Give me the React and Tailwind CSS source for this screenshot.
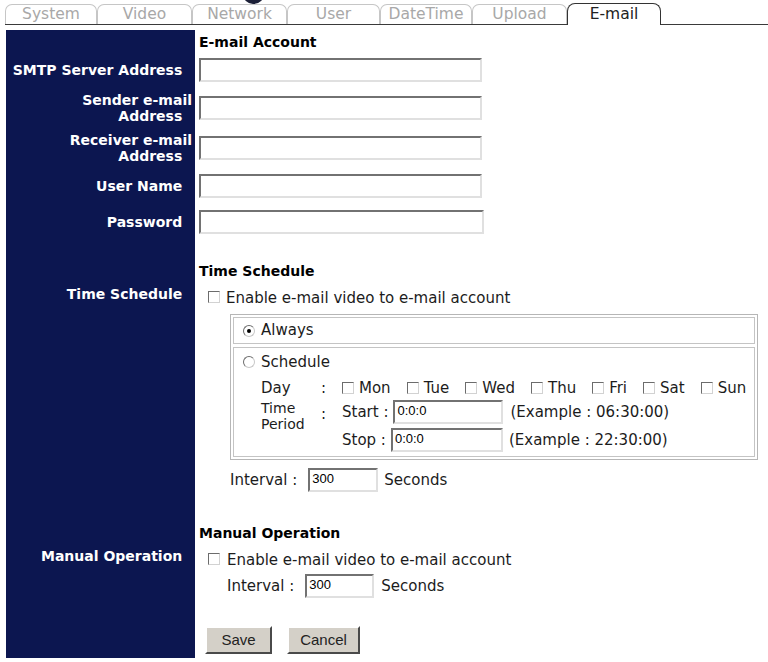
import React from 'react';

const tabs = [
  { name: 'System', w: 'w-[92px]' },
  { name: 'Video', w: 'w-[95px]' },
  { name: 'Network', w: 'w-[95px]' },
  { name: 'User', w: 'w-[93px]' },
  { name: 'DateTime', w: 'w-[92px]' },
  { name: 'Upload', w: 'w-[95px]' },
];

const days = ['Mon', 'Tue', 'Wed', 'Thu', 'Fri', 'Sat', 'Sun'];

// two trailing nbsp keep the label text off the panel edge, like the old table cells
const pad = (s) => s + '\u00a0\u00a0';

function Checkbox() {
  return (
    <span className="inline-block w-[12px] h-[12px] shrink-0 bg-white border border-[#d2d2d2] border-t-[#6c6c6c] border-l-[#6c6c6c]" />
  );
}

function Radio({ checked }) {
  return (
    <span className="w-[12px] h-[12px] shrink-0 rounded-full bg-white border border-[#c8c8c8] border-t-[#6c6c6c] border-l-[#6c6c6c] flex items-center justify-center">
      {checked && <span className="w-[4px] h-[4px] rounded-full bg-black" />}
    </span>
  );
}

function TextBox({ className = '', value }) {
  return (
    <div
      className={`h-[24px] shrink-0 bg-white border-2 border-[#e0e0e0] border-t-[#727272] border-l-[#727272] pl-[2px] pt-[1px] font-['Liberation_Sans',sans-serif] text-[13px] leading-[15px] text-black ${className}`}
    >
      {value}
    </div>
  );
}

function Button({ className = '', children }) {
  return (
    <div
      className={`h-[28px] flex items-center justify-center bg-[#d4d0c8] border-2 border-[#4a4a4a] border-t-white border-l-white font-['Liberation_Sans',sans-serif] text-[15px] text-[#222] ${className}`}
    >
      {children}
    </div>
  );
}

function Row({ label, h, labelClass = '', children }) {
  return (
    <>
      <div
        className={`bg-[#0c1650] flex items-center justify-end text-right pr-[3px] font-bold text-[14px] leading-[16px] text-white ${h} ${labelClass}`}
      >
        {label}
      </div>
      <div className={`flex items-center ${h}`}>{children}</div>
    </>
  );
}

export default function App() {
  return (
    <div className="relative w-[768px] h-[662px] overflow-hidden bg-white font-['DejaVu_Sans',sans-serif] text-[15px] text-[#1c1c1c]">
      {/* bottom of the logo peeking in above the tabs */}
      <div className="absolute left-[243px] top-[-16px] w-[21px] h-[20px] rounded-full bg-[#1c2038]" />

      {/* tab strip */}
      <div className="ml-[5px] h-[25px] flex items-end border-b border-[#3a3a3a]">
        {tabs.map((t) => (
          <div
            key={t.name}
            className={`${t.w} h-[20px] flex items-center justify-center border border-b-0 border-[#c6c6c6] rounded-t-[7px] text-[15.5px] text-[#a8a8a8]`}
          >
            {t.name}
          </div>
        ))}
        <div className="w-[94px] h-[22px] -mb-px flex items-center justify-center bg-white border border-b-0 border-[#333] rounded-t-[8px] text-[15.5px] text-[#222]">
          E-mail
        </div>
      </div>

      <div className="mt-[5px] ml-[6px] grid grid-cols-[189px_1fr] gap-x-[4px]">
        <Row h="h-[24px]">
          <span className="font-bold text-[14px] text-black">E-mail Account</span>
        </Row>
        <Row h="h-[32px]" label={pad('SMTP Server Address')}>
          <TextBox className="w-[283px]" />
        </Row>
        <Row h="h-[44px]" label={pad('Sender e-mail Address')}>
          <TextBox className="w-[283px]" />
        </Row>
        <Row h="h-[36px]" label={pad('Receiver e-mail Address')}>
          <TextBox className="w-[283px]" />
        </Row>
        <Row h="h-[40px]" label={pad('User Name')}>
          <TextBox className="w-[283px]" />
        </Row>
        <Row h="h-[32px]" label={pad('Password')}>
          <TextBox className="w-[285px]" />
        </Row>
        <Row h="h-[20px]" />

        {/* time schedule */}
        <Row h="h-[26px]">
          <span className="font-bold text-[14px] text-black">Time Schedule</span>
        </Row>
        <Row h="h-[28px]" label={pad('Time Schedule')} labelClass="pb-[8px]">
          <span className="ml-[9px]">
            <Checkbox />
          </span>
          <span className="ml-[6px]">Enable e-mail video to e-mail account</span>
        </Row>
        <Row h="h-[150px]">
          <div className="ml-[31px] w-[528px] h-[146px] border border-[#b6b6b6] p-[2px] flex flex-col gap-[3px]">
            <div className="h-[27px] border border-[#c4c4c4] flex items-center pl-[9px]">
              <Radio checked />
              <span className="ml-[6px]">Always</span>
            </div>
            <div className="h-[110px] border border-[#c4c4c4] pl-[9px]">
              <div className="mt-[4px] h-[20px] flex items-center">
                <Radio />
                <span className="ml-[6px]">Schedule</span>
              </div>
              <div className="ml-[18px] mt-[5px] h-[20px] grid grid-cols-[58px_23px_1fr] items-center">
                <span>Day</span>
                <span className="pl-[2px]">:</span>
                <div className="flex items-center">
                  {days.map((d) => (
                    <div key={d} className="flex items-center mr-[16px] last:mr-0">
                      <Checkbox />
                      <span className="ml-[5px]">{d}</span>
                    </div>
                  ))}
                </div>
              </div>
              <div className="ml-[18px] mt-[3px] grid grid-cols-[58px_23px_1fr]">
                <div className="text-[14px] leading-[16px]">
                  Time
                  <br />
                  Period
                </div>
                <div className="pl-[2px] mt-[6px] leading-[16px]">:</div>
                <div className="flex flex-col gap-[4px]">
                  <div className="h-[24px] flex items-center">
                    <span>Start :</span>
                    <TextBox className="ml-[5px] w-[110px]" value="0:0:0" />
                    <span className="ml-[7px]">(Example : 06:30:00)</span>
                  </div>
                  <div className="h-[24px] flex items-center">
                    <span>Stop :</span>
                    <TextBox className="ml-[5px] w-[112px]" value="0:0:0" />
                    <span className="ml-[6px]">(Example : 22:30:00)</span>
                  </div>
                </div>
              </div>
            </div>
          </div>
        </Row>
        <Row h="h-[36px]">
          <span className="ml-[31px]">Interval :</span>
          <TextBox className="ml-[11px] w-[70px]" value="300" />
          <span className="ml-[6px]">Seconds</span>
        </Row>
        <Row h="h-[22px]" />

        {/* manual operation */}
        <Row h="h-[26px]">
          <span className="font-bold text-[14px] text-black">Manual Operation</span>
        </Row>
        <Row h="h-[28px]" label={pad('Manual Operation')} labelClass="pb-[8px]">
          <span className="ml-[9px]">
            <Checkbox />
          </span>
          <span className="ml-[7px]">Enable e-mail video to e-mail account</span>
        </Row>
        <Row h="h-[24px]">
          <span className="ml-[28px]">Interval :</span>
          <TextBox className="ml-[11px] w-[69px]" value="300" />
          <span className="ml-[7px]">Seconds</span>
        </Row>
        <Row h="h-[60px]">
          <div className="self-end mb-[4px] ml-[6px] flex gap-[15px]">
            <Button className="w-[67px]">Save</Button>
            <Button className="w-[73px]">Cancel</Button>
          </div>
        </Row>
      </div>
    </div>
  );
}
